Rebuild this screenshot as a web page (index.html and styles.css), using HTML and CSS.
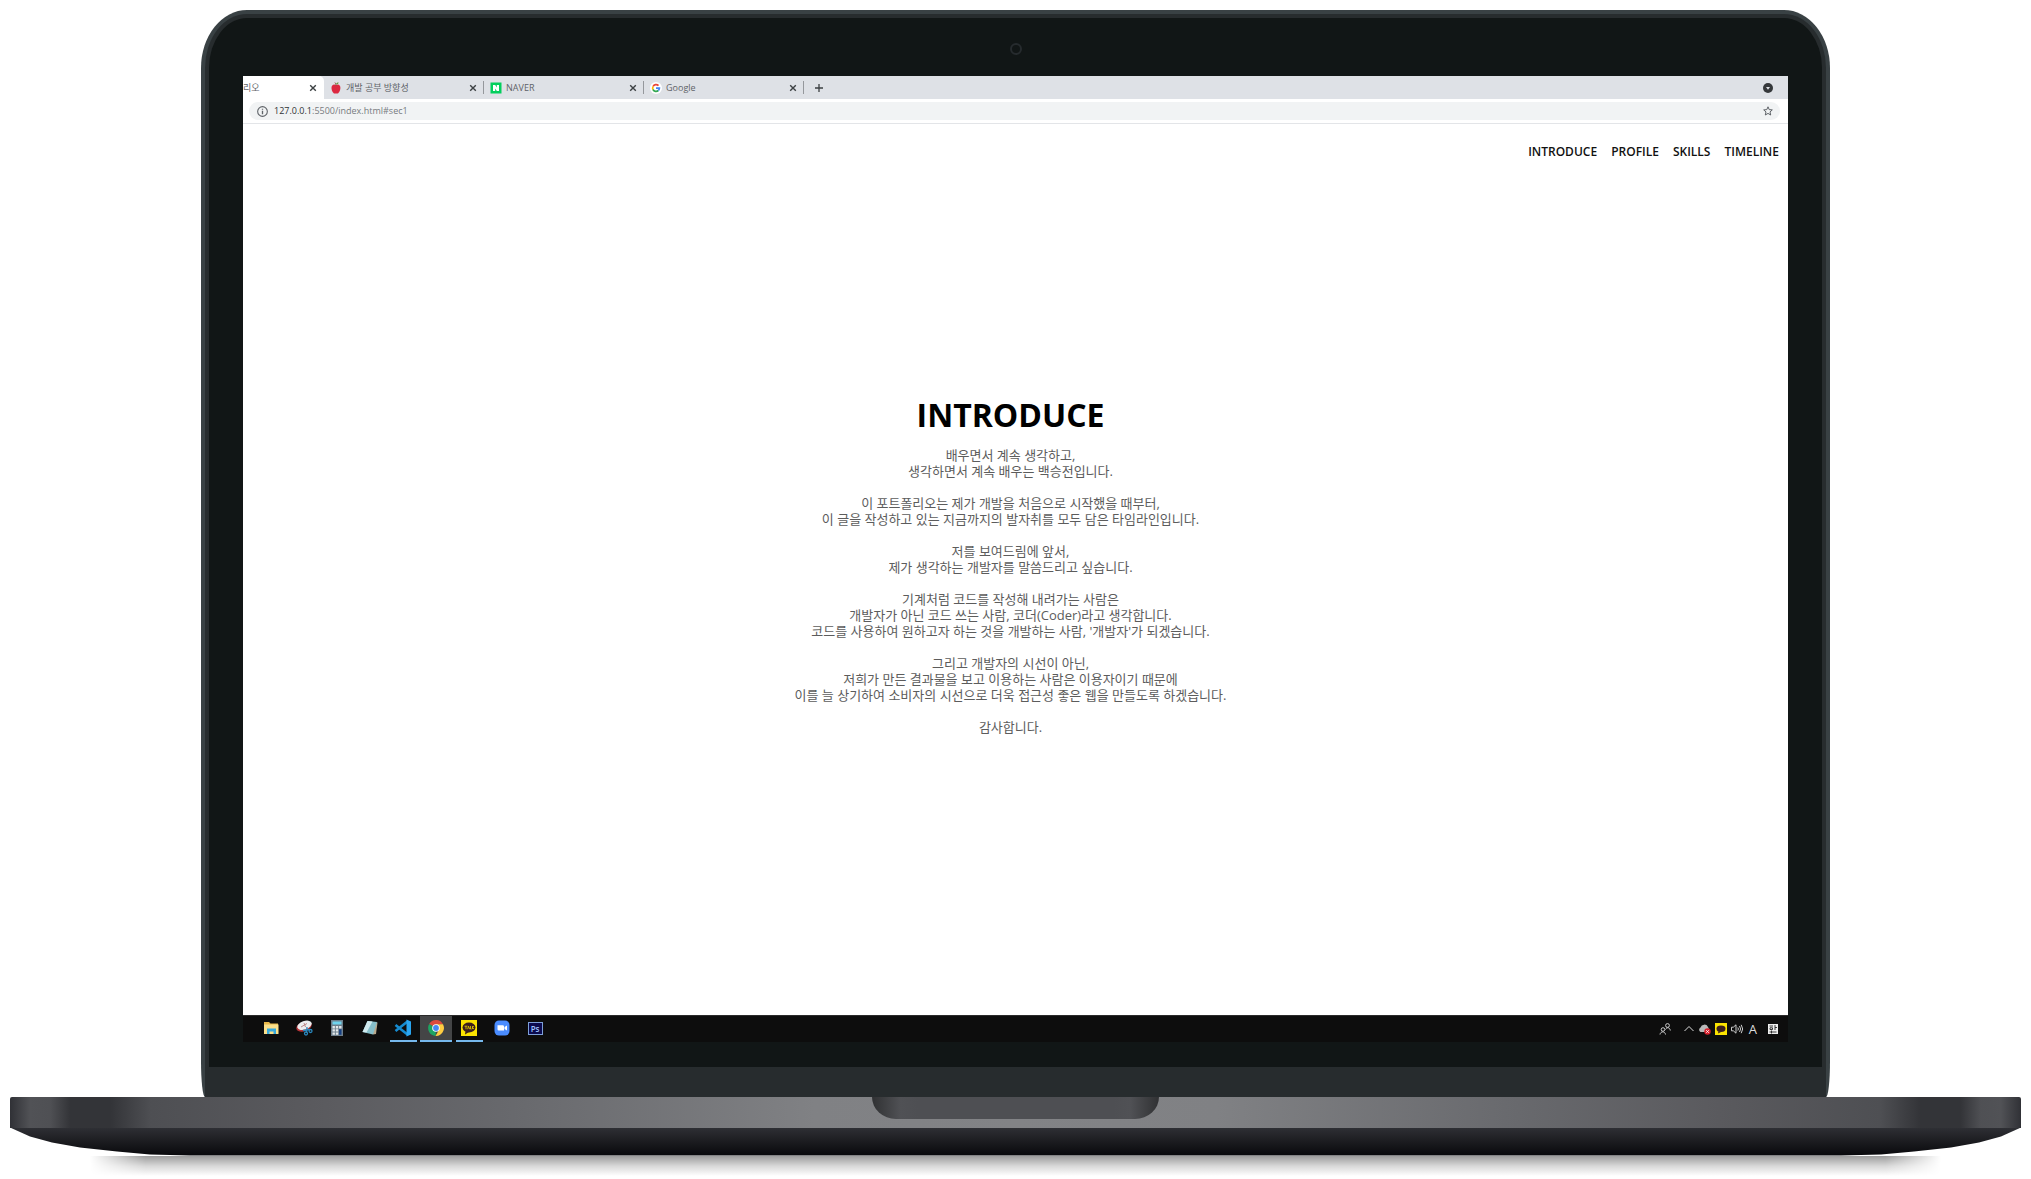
FILE: index.html
```html
<!DOCTYPE html>
<html lang="ko">
<head>
<meta charset="utf-8">
<meta name="viewport" content="width=device-width, initial-scale=1">
<title>포트폴리오</title>
<link rel="stylesheet" href="styles.css">
</head>
<body>
<main class="laptop">
  <div class="lid">
    <div class="bezel">
      <div class="camera-strip"><span class="camera"></span></div>
      <div class="screen">
        <div class="tabs">
          <div class="tab tab-active">
            <span class="tab-title">리오</span>
            <button class="close" aria-label="탭 닫기"><svg viewBox="0 0 8 8"><path d="M1.200 1.200l5.600 5.600M6.800 1.200L1.200 6.800"/></svg></button>
          </div>
          <div class="tab">
            <svg class="favicon" viewBox="0 0 12 12"><path fill="#dc2840" d="M6 3.200C8 1.800 10.600 3 10.400 6c-.2 3-1.800 5.600-3.200 5.600-.6 0-.8-.2-1.200-.2s-.6.200-1.200.200C3.400 11.600 1.600 9 1.500 6 1.400 3 4 1.800 6 3.200z"/><path d="M6 3.500C6 2 5.500 1.200 5 .6" stroke="#7a4a2a" fill="none"/><path fill="#5d9a3c" d="M6 2.300C6.200.8 7.500.3 8.700.400 8.500 1.600 7.500 2.300 6 2.300z"/></svg>
            <span class="tab-title">개발 공부 방향성</span>
            <button class="close" aria-label="탭 닫기"><svg viewBox="0 0 8 8"><path d="M1.200 1.200l5.600 5.600M6.800 1.200L1.200 6.800"/></svg></button>
          </div>
          <div class="tab">
            <svg class="favicon" viewBox="0 0 12 12"><path fill="#03cf5d" d="M.5.500h11v11H.5z"/><path fill="#fff" d="M3 3h2.200l1.600 2.500V3H9v6H6.800L5.200 6.600V9H3z"/></svg>
            <span class="tab-title">NAVER</span>
            <button class="close" aria-label="탭 닫기"><svg viewBox="0 0 8 8"><path d="M1.200 1.200l5.600 5.600M6.800 1.200L1.200 6.800"/></svg></button>
          </div>
          <div class="tab">
            <svg class="favicon" viewBox="0 0 12 12"><circle cx="6" cy="6" r="6" fill="#fff"/><g fill="none" stroke-width="1.700"><path stroke="#ea4335" d="M3 4.500A3.400 3.400 0 0 1 8.500 3.600"/><path stroke="#fbbc05" d="M3 4.500a3.400 3.400 0 0 0 0 3"/><path stroke="#34a853" d="M3 7.500a3.400 3.400 0 0 0 5.300 1"/><path stroke="#4285f4" d="M8.300 8.500A3.400 3.400 0 0 0 9.400 6.200H6"/></g></svg>
            <span class="tab-title">Google</span>
            <button class="close" aria-label="탭 닫기"><svg viewBox="0 0 8 8"><path d="M1.200 1.200l5.600 5.600M6.800 1.200L1.200 6.800"/></svg></button>
          </div>
          <button class="icon-button new-tab" aria-label="새 탭"><svg viewBox="0 0 10 10"><path d="M5 1v8M1 5h8" stroke="#3c4043" stroke-width="1.300"/></svg></button>
          <button class="icon-button search-tabs" aria-label="탭 검색"><svg viewBox="0 0 10 10"><circle cx="5" cy="5" r="5" fill="#35383b"/><path fill="#dee1e6" d="M3 4h4L5 6.700z"/></svg></button>
        </div>
        <div class="toolbar">
          <div class="omnibox">
            <svg class="info" viewBox="0 0 10 10" aria-hidden="true"><circle cx="5" cy="5" r="4.400" fill="none" stroke="#5f6368"/><path d="M5 4.400V7.500M5 2.500v1" stroke="#5f6368" stroke-width="1.200"/></svg>
            <span class="url"><span class="host">127.0.0.1</span>:5500/index.html#sec1</span>
            <button class="icon-button" aria-label="북마크"><svg viewBox="0 0 10 10"><path fill="none" stroke="#5f6368" d="M5 .8l1.200 2.800 3.100.3-2.300 2 .7 3.100L5 7.400 2.300 9l.7-3.100-2.300-2 3.100-.3z"/></svg></button>
          </div>
        </div>
        <div class="page">
          <nav class="menu">
            <a href="#sec1">INTRODUCE</a>
            <a href="#sec2">PROFILE</a>
            <a href="#sec3">SKILLS</a>
            <a href="#sec4">TIMELINE</a>
          </nav>
          <section class="intro" id="sec1">
            <h1>INTRODUCE</h1>
            <p>배우면서 계속 생각하고,<br>생각하면서 계속 배우는 백승전입니다.</p>
            <p>이 포트폴리오는 제가 개발을 처음으로 시작했을 때부터,<br>이 글을 작성하고 있는 지금까지의 발자취를 모두 담은 타임라인입니다.</p>
            <p>저를 보여드림에 앞서,<br>제가 생각하는 개발자를 말씀드리고 싶습니다.</p>
            <p>기계처럼 코드를 작성해 내려가는 사람은<br>개발자가 아닌 코드 쓰는 사람, 코더(Coder)라고 생각합니다.<br>코드를 사용하여 원하고자 하는 것을 개발하는 사람, '개발자'가 되겠습니다.</p>
            <p>그리고 개발자의 시선이 아닌,<br>저희가 만든 결과물을 보고 이용하는 사람은 이용자이기 때문에<br>이를 늘 상기하여 소비자의 시선으로 더욱 접근성 좋은 웹을 만들도록 하겠습니다.</p>
            <p>감사합니다.</p>
          </section>
        </div>
        <div class="taskbar">
          <div class="apps">
            <button class="app" aria-label="파일 탐색기"><svg viewBox="0 0 18 18"><path fill="#e8b84a" d="M2 3h5l1.500 1.500H16V7H2z"/><path fill="#fbe08c" d="M2 5.500h14.500V15H2z"/><path fill="#38a9dd" d="M5 9.500h9V15h-2.500v-2.500h-4V15H5z"/></svg></button>
            <button class="app" aria-label="캡처 도구"><svg viewBox="0 0 18 18"><ellipse cx="9" cy="7.500" rx="8" ry="4.800" fill="#b53236" transform="rotate(-20 9 7.500)"/><ellipse cx="9.500" cy="6.300" rx="7.500" ry="4.200" fill="#eceef0" transform="rotate(-20 9.500 6.300)"/><path d="M6 8l6-3.500M9 4l1.500 4" stroke="#b88"/><g fill="none" stroke="#2a87bd" stroke-width="1.300"><path d="M8 11.500l7-1M12 8l-.5 6"/><circle cx="11" cy="14.500" r="1.500"/><circle cx="15.500" cy="12" r="1.500"/></g></svg></button>
            <button class="app" aria-label="계산기"><svg viewBox="0 0 18 18"><path fill="#6d7e8b" d="M3 1h12v16H3z"/><path fill="#6fd4ee" d="M4.500 2.500h9v3h-9z"/><path fill="#e3e8eb" d="M4.500 7h2.400v2.400H4.500zm3.300 0h2.400v2.400H7.800zm3.300 0h2.400v2.400h-2.400zM4.500 10.200h2.400v2.400H4.500zm3.300 0h2.400v2.400H7.800zM4.500 13.400h2.400v2.400H4.500zm3.300 0h2.400v2.400H7.800z"/><path fill="#153f84" d="M11.100 10.200h2.400v5.600h-2.400z"/></svg></button>
            <button class="app" aria-label="메모장"><svg viewBox="0 0 18 18"><path fill="#b8a78b" d="M7 2.500l9.500 1L15 15l-3 .500z"/><path fill="#86bfca" d="M6.500 2l9.500 1-4 12.500L1.500 13z"/><path fill="#d0eaef" d="M6.500 2l5 .500-6 11L1.500 13z"/></svg></button>
            <button class="app open" aria-label="Visual Studio Code"><svg viewBox="0 0 18 18"><path d="M1.500 6l12 9.500M1.500 12l12-9.500" stroke="#168bd0" stroke-width="2.600"/><path fill="#2aa5f0" d="M12.500.500L17 2.500v13l-4.500 2z"/></svg></button>
            <button class="app open current" aria-label="Chrome"><svg viewBox="0 0 18 18"><path fill="#dd4b3e" d="M9 9L2.200 5A7.900 7.900 0 0 1 16 5.300H9z"/><path fill="#1da462" d="M9 9l-.4 7.900A7.900 7.900 0 0 1 2.200 5z"/><path fill="#ffcd41" d="M9 5.300h7A7.900 7.900 0 0 1 8.500 16.900L12 10.800z"/><circle cx="9" cy="9" r="3.800" fill="#fff"/><circle cx="9" cy="9" r="2.900" fill="#4688f4"/></svg></button>
            <button class="app open" aria-label="카카오톡"><svg viewBox="0 0 18 18"><path fill="#fbe300" d="M1 1h16v16H1z"/><ellipse cx="9" cy="8.500" rx="6.500" ry="5" fill="#3b1e1e"/><path fill="#3b1e1e" d="M5.500 12l-.5 3.500 4-2.500z"/><path d="M4.500 7.200h3M6 7.200v3M7.600 10.200l1-3 1 3M10.500 7v3h1.200M12.500 7v3M14 7.200l-1.500 1.400L14 10" fill="none" stroke="#e8d000" stroke-width=".8"/></svg></button>
            <button class="app" aria-label="Zoom"><svg viewBox="0 0 18 18"><rect x="1.500" y="1.500" width="15" height="15" rx="4.500" fill="#4a8cff"/><path fill="#fff" d="M4.500 6.200h5.200q1.300 0 1.300 1.300v4H5.800q-1.300 0-1.300-1.300zM11.500 8l2.500-1.600v5.200L11.500 10z"/></svg></button>
            <button class="app" aria-label="Photoshop"><span class="ps">Ps</span></button>
          </div>
          <div class="tray">
            <svg class="people" viewBox="0 0 12 12" aria-hidden="true"><g fill="none" stroke="#ccc"><circle cx="8.500" cy="2.500" r="1.900"/><path d="M6.500 6.500C7.500 4 10.800 4 11.300 7.500"/><circle cx="4" cy="6.500" r="1.800"/><path d="M1 11.500C1.500 8 6 8 6.500 11.500"/></g></svg>
            <svg viewBox="0 0 12 12" aria-hidden="true"><path d="M1.500 8L6 3.500 10.500 8" fill="none" stroke="#ddd"/></svg>
            <svg viewBox="0 0 12 12" aria-hidden="true"><path fill="#b9b9b9" d="M1.500 9a2.500 2.500 0 0 1 0-4.500A4 4 0 0 1 9 4l1.500 3v2z"/><circle cx="8.500" cy="8.500" r="3.200" fill="#d8232f"/><path d="M7.300 7.300l2.400 2.400m0-2.400L7.300 9.700" stroke="#fff"/></svg>
            <svg viewBox="0 0 12 12" aria-hidden="true"><path fill="#fbe300" d="M0 0h12v12H0z"/><ellipse cx="6" cy="5.800" rx="4.500" ry="3.300" fill="#3b1e1e"/><path fill="#3b1e1e" d="M3.500 8L3 10.500 6 9z"/></svg>
            <svg viewBox="0 0 12 12" aria-hidden="true"><path d="M.5 4.200h1.800L5 1.800v8.400L2.300 7.800H.5zM6.800 4.500q1.200 1.500 0 3M8.500 3q2.200 3 0 6M10.200 1.800q3 4.200 0 8.400" fill="none" stroke="#ccc"/></svg>
            <span class="ime">A</span>
            <svg class="hanja" viewBox="0 0 12 12" aria-hidden="true"><path fill="#eee" d="M1 1h10v10H1z"/><path d="M2.500 3h3.500M3 4.800h2.500v1.700H3zM8 2v5M8 4.500h2M2.500 9h7M4.500 7.500v3" fill="none" stroke="#222" stroke-width=".9"/></svg>
          </div>
        </div>
      </div>
    </div>
    <div class="chin"></div>
  </div>
  <div class="base"><div class="notch"></div></div>
  <div class="underside"></div>
  <div class="shadow"></div>
</main>
</body>
</html>
```
FILE: styles.css
```css
* { box-sizing: border-box; }

body {
  margin: 0;
  background: #fff;
  font-family: "Open Sans", "Noto Sans CJK KR", sans-serif;
  overflow-x: hidden;
}

button {
  margin: 0;
  padding: 0;
  border: 0;
  background: none;
  font: inherit;
}

svg { display: block; }

.laptop {
  display: flex;
  flex-direction: column;
  align-items: center;
  padding: 10px 10px 0;
}

/* Lid */
.lid {
  width: 81%;
  border: 4px solid #394144;
  border-bottom: 0;
  border-radius: 46px 46px 4px 4px / 58px 58px 36px 36px;
  background: #272c2e;
  padding: 4px 4px 0;
}

.bezel {
  padding: 0 34px 25px;
  background: #111616;
  border-radius: 38px 38px 0 0 / 50px 50px 0 0;
}

.camera-strip {
  display: flex;
  align-items: center;
  justify-content: center;
  height: 58px;
  padding-top: 4px;
}

.camera {
  width: 12px;
  height: 12px;
  border: 2px solid #262b2e;
  border-radius: 50%;
}

.chin { height: 30px; }

.screen {
  display: flex;
  flex-direction: column;
  aspect-ratio: 1.6;
  background: #fff;
  overflow: hidden;
}

/* Browser chrome */
.tabs {
  display: flex;
  align-items: center;
  height: 23px;
  flex: none;
  background: #dee1e6;
  font-size: 9px;
  line-height: 12px;
  color: #5f6368;
}

.tab {
  display: flex;
  flex: none;
  align-items: center;
  gap: 4px;
  width: 160px;
  height: 13px;
  padding: 0 6px;
  border-right: 1px solid #95989c;
}

.tab-active {
  width: 81px;
  height: 23px;
  padding: 0 7px 0 0;
  border-right: 0;
  border-radius: 0 5px 0 0;
  background: #fff;
}

.tab-title {
  flex: 1;
  white-space: nowrap;
}

.favicon { width: 12px; height: 12px; }

.close svg {
  width: 8px;
  height: 8px;
  stroke: #3c4043;
  stroke-width: 1.400;
}

.icon-button svg { width: 10px; height: 10px; }

.new-tab { margin-left: 10px; }

.search-tabs { margin: 0 15px 0 auto; }

.toolbar {
  flex: none;
  height: 25px;
  padding: 3px 8px 3px 6px;
  border-bottom: 1px solid #e3e5e8;
}

.omnibox {
  display: flex;
  align-items: center;
  gap: 6px;
  height: 18px;
  padding: 0 7px 0 8px;
  border-radius: 9px;
  background: #f1f3f4;
  font-size: 9px;
  line-height: 12px;
  color: #777b7f;
}

.info { width: 11px; height: 11px; }

.url { flex: 1; }

.host { color: #303337; }

/* Web page */
.page {
  display: flex;
  flex: 1;
  flex-direction: column;
}

.menu {
  display: flex;
  justify-content: flex-end;
  gap: 14px;
  padding: 19px 9px 0;
}

.menu a {
  color: #111;
  font-size: 12px;
  font-weight: 600;
  line-height: 18px;
  text-decoration: none;
}

.intro {
  display: flex;
  flex: 1;
  flex-direction: column;
  justify-content: center;
  gap: 16px;
  padding: 0 10px 42px 0;
  text-align: center;
}

.intro h1 {
  margin: 0;
  color: #000;
  font-size: 32px;
  font-weight: 700;
  line-height: 32px;
}

.intro p {
  margin: 0;
  color: #5c5c5c;
  font-size: 13px;
  line-height: 16px;
}

/* Taskbar */
.taskbar {
  display: flex;
  flex: none;
  justify-content: space-between;
  height: 27px;
  border-top: 1px solid #2a2a2a;
  background: #0d0d0d;
}

.apps { display: flex; gap: 1px; padding-left: 12px; }

.app {
  display: flex;
  align-items: center;
  justify-content: center;
  width: 32px;
  padding-bottom: 1px;
}

.app svg { width: 18px; height: 18px; }

.open {
  background: linear-gradient(#76b9ed, #76b9ed) center bottom / 27px 2px no-repeat;
}

.current {
  background-color: #444546;
  background-size: 100% 2px;
}

.ps {
  width: 15px;
  height: 13px;
  border: 1px solid #7d9fd8;
  background: #0b0a4e;
  color: #9fc3ff;
  font-size: 8px;
  font-weight: 600;
  line-height: 11px;
}

.tray {
  display: flex;
  align-items: center;
  gap: 4px;
  padding-right: 9px;
}

.tray svg { width: 12px; height: 12px; }

.tray .people { margin-right: 8px; }

.ime {
  width: 12px;
  color: #ddd;
  font-size: 13px;
  line-height: 16px;
  text-align: center;
}

.tray .hanja { margin-left: 4px; }

/* Keyboard deck */
.base {
  display: flex;
  justify-content: center;
  width: 100%;
  height: 31px;
  border-radius: 2px 2px 0 0;
  background: linear-gradient(90deg, #303136 0, #515256 1%, #4f5054 2%, #333438 3%, #333438 5%, #4e4f53 7%, #5a5a5e 15%, #68696d 25%, #808184 40%, #828386 50%, #808184 60%, #68696d 75%, #5a5a5e 85%, #4e4f53 93%, #333438 95%, #333438 97%, #4f5054 98%, #515256 99%, #303136 100%);
}

.notch {
  width: 287px;
  height: 22px;
  border-radius: 0 0 24px 24px / 0 0 22px 22px;
  background: linear-gradient(90deg, #303133, #505155 10%, #4e4f53 16%, #4e4f53 84%, #505155 90%, #303133);
}

.underside {
  width: 100%;
  height: 28px;
  background: linear-gradient(#2e2f34, #08080b);
  clip-path: polygon(0 0, 20px 9px, 42px 15px, 70px 20px, 107px 24px, 140px 27px, 180px 28px,
    calc(100% - 180px) 28px, calc(100% - 140px) 27px, calc(100% - 107px) 24px,
    calc(100% - 70px) 20px, calc(100% - 42px) 15px, calc(100% - 20px) 9px, 100% 0);
}

.shadow {
  width: 92%;
  height: 20px;
  background: linear-gradient(#9c9c9c, #d8d8d8 50%, #fff);
  -webkit-mask-image: linear-gradient(90deg, transparent, #000 3%, #000 97%, transparent);
  mask-image: linear-gradient(90deg, transparent, #000 3%, #000 97%, transparent);
}
```
